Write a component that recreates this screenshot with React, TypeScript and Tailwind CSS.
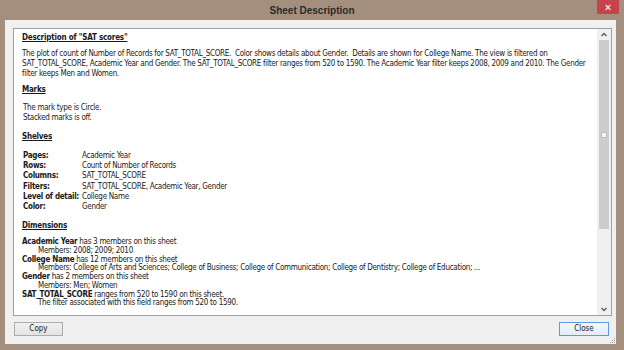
import React from 'react';

const shelves: [string, string][] = [
  ['Pages:', 'Academic Year'],
  ['Rows:', 'Count of Number of Records'],
  ['Columns:', 'SAT_TOTAL_SCORE'],
  ['Filters:', 'SAT_TOTAL_SCORE, Academic Year, Gender'],
  ['Level of detail:', 'College Name'],
  ['Color:', 'Gender'],
];

const dims: { name: string; rest: string; sub: string }[] = [
  { name: 'Academic Year', rest: ' has 3 members on this sheet', sub: 'Members: 2008; 2009; 2010' },
  {
    name: 'College Name',
    rest: ' has 12 members on this sheet',
    sub: 'Members: College of Arts and Sciences; College of Business; College of Communication; College of Dentistry; College of Education; ...',
  },
  { name: 'Gender', rest: ' has 2 members on this sheet', sub: 'Members: Men; Women' },
  {
    name: 'SAT_TOTAL_SCORE',
    rest: ' ranges from 520 to 1590 on this sheet.',
    sub: 'The filter associated with this field ranges from 520 to 1590.',
  },
];

const Heading = ({ children }: { children: React.ReactNode }) => (
  <p className="font-bold underline leading-[10px] tracking-[-0.2px]">{children}</p>
);

export default function App() {
  return (
    <div
      className="flex h-[350px] w-[624px] flex-col bg-[#a48f7e] text-[#1a1a1a]"
      style={{ fontFamily: '"DejaVu Sans Condensed", "Liberation Sans", sans-serif' }}
    >
      {/* title bar */}
      <div className="relative flex h-[20px] items-center justify-center">
        <span className="text-[10px] font-bold text-[#2b2b2b]" style={{ fontFamily: '"Liberation Sans", sans-serif' }}>
          Sheet Description
        </span>
        <button className="absolute top-0 right-[5px] flex h-[14px] w-[22px] items-center justify-center bg-[#c7434c] text-[10px] font-bold text-white">
          ✕
        </button>
      </div>

      {/* client area */}
      <div className="mr-[8px] mb-[6px] ml-[5px] flex flex-1 flex-col bg-[#f0f0f0] pt-[8px] pr-[4px] pl-[8px]">
        <div className="flex h-[288px] border border-[#a0a0a0] bg-white">
          <div className="flex-1 overflow-hidden pt-[4px] pl-[8px] text-[8px] tracking-[-0.3px] whitespace-nowrap">
            <Heading>Description of "SAT scores"</Heading>
            <div className="mt-[6px] leading-[10px]">
              <p>
                The plot of count of Number of Records for SAT_TOTAL_SCORE.&nbsp; Color shows details about Gender.&nbsp; Details are
                shown for College Name. The view is filtered on
              </p>
              <p>
                SAT_TOTAL_SCORE, Academic Year and Gender. The SAT_TOTAL_SCORE filter ranges from 520 to 1590. The Academic Year
                filter keeps 2008, 2009 and 2010. The Gender
              </p>
              <p>filter keeps Men and Women.</p>
            </div>

            <div className="mt-[6px]">
              <Heading>Marks</Heading>
            </div>
            <div className="mt-[8px] pl-[1px] leading-[10px]">
              <p>The mark type is Circle.</p>
              <p>Stacked marks is off.</p>
            </div>

            <div className="mt-[9px]">
              <Heading>Shelves</Heading>
            </div>
            <div className="mt-[9px] grid grid-cols-[59px_1fr] pl-[1px] leading-[10.2px]">
              {shelves.map(([k, v]) => (
                <React.Fragment key={k}>
                  <span className="font-bold">{k}</span>
                  <span>{v}</span>
                </React.Fragment>
              ))}
            </div>

            <div className="mt-[9px]">
              <Heading>Dimensions</Heading>
            </div>
            <div className="mt-[7px] leading-[8.75px]">
              {dims.map((d) => (
                <div key={d.name}>
                  <p>
                    <span className="font-bold">{d.name}</span>
                    {d.rest}
                  </p>
                  <p className="pl-[16px]">{d.sub}</p>
                </div>
              ))}
            </div>
          </div>

          {/* scrollbar */}
          <div className="flex w-[14px] flex-col items-center bg-[#f0f0f0]">
            <svg width="14" height="11" viewBox="0 0 14 11" className="shrink-0">
              <path d="M4.5 7 L7 4.5 L9.5 7" fill="none" stroke="#606060" strokeWidth="1.4" />
            </svg>
            <div className="relative h-[189px] w-[10px] bg-[#cdcdcd]">
              <div className="absolute top-[92px] left-[2px] h-[6px] w-[6px] border border-[#bdbdbd] bg-[#f4f4f4]" />
            </div>
            <div className="flex-1" />
            <svg width="14" height="11" viewBox="0 0 14 11" className="shrink-0">
              <path d="M4.5 4 L7 6.5 L9.5 4" fill="none" stroke="#606060" strokeWidth="1.4" />
            </svg>
          </div>
        </div>

        <div className="relative flex items-start justify-between pt-[6px] pl-[1px] pr-[3px] text-[8px]">
          <button className="flex h-[14px] w-[49px] items-center justify-center border border-[#acacac] bg-gradient-to-b from-[#f0f0f0] to-[#e3e3e3]">
            Copy
          </button>
          <button className="flex h-[14px] w-[50px] items-center justify-center border border-[#5b9ce0] bg-gradient-to-b from-[#f2f7fc] to-[#e3edf7]">
            Close
          </button>
          <svg width="6" height="6" viewBox="0 0 6 6" className="absolute right-[-4px] bottom-[-8px]">
            <rect x="4" y="0" width="1" height="1" fill="#a0a0a0" />
            <rect x="2" y="2" width="1" height="1" fill="#a0a0a0" />
            <rect x="4" y="2" width="1" height="1" fill="#a0a0a0" />
            <rect x="0" y="4" width="1" height="1" fill="#a0a0a0" />
            <rect x="2" y="4" width="1" height="1" fill="#a0a0a0" />
            <rect x="4" y="4" width="1" height="1" fill="#a0a0a0" />
          </svg>
        </div>
      </div>
    </div>
  );
}
